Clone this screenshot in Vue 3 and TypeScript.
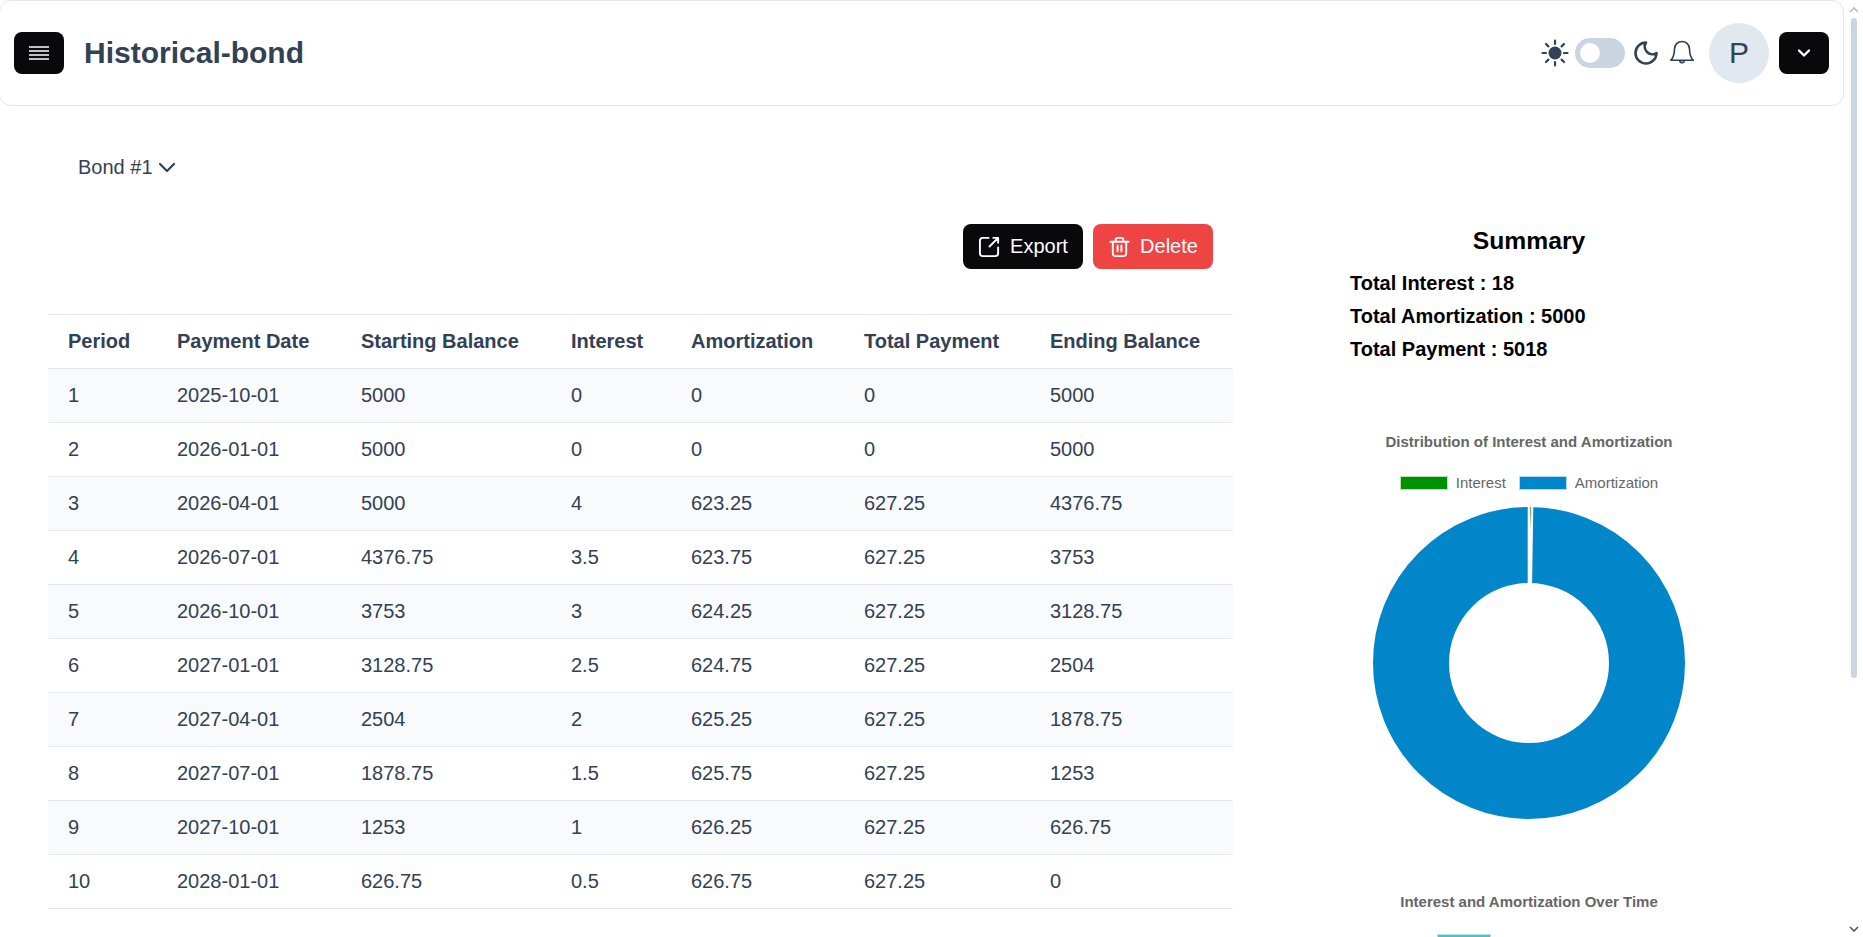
<template>
  <div class="page">
    <header class="topbar">
      <div class="topbar-left">
        <button class="dark-btn menu-btn">
          <svg width="20" height="14" viewBox="0 0 20 14"><path d="M0 1h20M0 5h20M0 9h20M0 13h20" stroke="#fff" stroke-width="1.5" fill="none" /></svg>
        </button>
        <h1 class="page-title">Historical-bond</h1>
      </div>
      <div class="topbar-right">
        <svg class="sun" width="28" height="28" viewBox="0 0 28 28" fill="none" stroke="#334155" stroke-width="2.2" stroke-linecap="round">
          <circle cx="14" cy="14" r="6.5" fill="#334155" stroke="none" />
          <path d="M14 1.5v3.5M14 23v3.5M1.5 14H5M23 14h3.5M5 5l2.4 2.4M20.6 20.6 23 23M5 23l2.4-2.4M20.6 7.4 23 5" />
        </svg>
        <span class="toggle"><span class="knob"></span></span>
        <svg class="moon" width="28" height="28" viewBox="0 0 24 24" fill="none" stroke="#334155" stroke-width="2.2" stroke-linecap="round" stroke-linejoin="round"><path d="M12 3a6.5 6.5 0 0 0 9 9 9 9 0 1 1-9-9Z" /></svg>
        <svg class="bell" width="30" height="30" viewBox="0 0 24 24" fill="none" stroke="#334155" stroke-width="1.3" stroke-linecap="round" stroke-linejoin="round"><path d="M6 8a6 6 0 0 1 12 0c0 7 3 9 3 9H3s3-2 3-9" /><path d="M10.3 18a2 2 0 0 0 3.4 0" /></svg>
        <span class="avatar">P</span>
        <button class="dark-btn caret-btn">
          <svg width="14" height="10" viewBox="0 0 14 10"><path d="M2 2.5l5 5 5-5" stroke="#fff" stroke-width="2.4" fill="none" stroke-linecap="round" stroke-linejoin="round" /></svg>
        </button>
      </div>
    </header>

    <div class="bond-select">
      <span>Bond #1</span>
      <svg width="20" height="12" viewBox="0 0 20 12"><path d="M3 3l7 7 7-7" stroke="#334155" stroke-width="2.2" fill="none" stroke-linecap="round" stroke-linejoin="round" /></svg>
    </div>

    <main class="content">
      <section class="left-col">
        <div class="actions">
          <button class="action-btn export">
            <svg width="23" height="23" viewBox="0 0 24 24" fill="none" stroke="#fff" stroke-width="2" stroke-linecap="round" stroke-linejoin="round"><path d="M11 3H5a3 3 0 0 0-3 3v13a3 3 0 0 0 3 3h13a3 3 0 0 0 3-3v-6" /><path d="M12 12 21 3M16 3h5v5" /></svg>
            Export
          </button>
          <button class="action-btn delete">
            <svg width="23" height="23" viewBox="0 0 24 24" fill="none" stroke="#fff" stroke-width="2" stroke-linecap="round" stroke-linejoin="round"><path d="M2.5 7h19M8 7V5a2 2 0 0 1 2-2h4a2 2 0 0 1 2 2v2M5 7v12a3 3 0 0 0 3 3h8a3 3 0 0 0 3-3V7M10 11v6M14 11v6" /></svg>
            Delete
          </button>
        </div>
        <table class="bond-table">
          <colgroup>
            <col v-for="w in colWidths" :key="w" :style="{ width: w + 'px' }" />
          </colgroup>
          <thead>
            <tr>
              <th v-for="h in headers" :key="h">{{ h }}</th>
            </tr>
          </thead>
          <tbody>
            <tr v-for="row in rows" :key="row[0]">
              <td v-for="(cell, i) in row" :key="i">{{ cell }}</td>
            </tr>
          </tbody>
        </table>
      </section>

      <aside class="right-col">
        <h2 class="summary-title">Summary</h2>
        <ul class="totals">
          <li>Total Interest : 18</li>
          <li>Total Amortization : 5000</li>
          <li>Total Payment : 5018</li>
        </ul>
        <div class="chart-title first">Distribution of Interest and Amortization</div>
        <div class="legend">
          <span class="swatch green"></span><span>Interest</span>
          <span class="swatch blue"></span><span>Amortization</span>
        </div>
        <svg class="donut" width="312" height="312" viewBox="0 0 312 312">
          <circle cx="156" cy="156" r="118" fill="none" stroke="#0086c9" stroke-width="76" />
          <path d="M154.7 0H160.3L159 80H154.7Z" fill="#fff" />
          <path d="M156.8 0H158.2L157.4 22Z" fill="#5cb85c" />
        </svg>
        <div class="chart-title second">Interest and Amortization Over Time</div>
        <span class="swatch teal"></span>
      </aside>
    </main>

    <div class="scrollbar">
      <svg width="10" height="6" viewBox="0 0 10 6"><path d="M1 5l4-4 4 4" stroke="#bbb" stroke-width="1.6" fill="none" /></svg>
      <div class="thumb"></div>
      <svg class="arrow-down" width="10" height="6" viewBox="0 0 10 6"><path d="M1 1l4 4 4-4" stroke="#555" stroke-width="1.6" fill="none" /></svg>
    </div>
  </div>
</template>

<script setup lang="ts">
const headers = ['Period', 'Payment Date', 'Starting Balance', 'Interest', 'Amortization', 'Total Payment', 'Ending Balance']
const colWidths = [109, 184, 210, 120, 173, 186, 203]
const rows: (string | number)[][] = [
  [1, '2025-10-01', 5000, 0, 0, 0, 5000],
  [2, '2026-01-01', 5000, 0, 0, 0, 5000],
  [3, '2026-04-01', 5000, 4, 623.25, 627.25, 4376.75],
  [4, '2026-07-01', 4376.75, 3.5, 623.75, 627.25, 3753],
  [5, '2026-10-01', 3753, 3, 624.25, 627.25, 3128.75],
  [6, '2027-01-01', 3128.75, 2.5, 624.75, 627.25, 2504],
  [7, '2027-04-01', 2504, 2, 625.25, 627.25, 1878.75],
  [8, '2027-07-01', 1878.75, 1.5, 625.75, 627.25, 1253],
  [9, '2027-10-01', 1253, 1, 626.25, 627.25, 626.75],
  [10, '2028-01-01', 626.75, 0.5, 626.75, 627.25, 0],
]
</script>

<style>
html, body { overflow: hidden; background: #fff; }
</style>

<style scoped>
.page {
  position: relative;
  height: 937px;
  overflow: hidden;
  font-family: "Liberation Sans", Arial, sans-serif;
  color: #334155;
}

.topbar {
  box-sizing: border-box;
  width: 1845px;
  height: 106px;
  margin-left: -1px;
  padding: 0 14px 0 14px;
  display: flex;
  align-items: center;
  justify-content: space-between;
  border: 1px solid #e2e8f0;
  border-radius: 12px;
}

.topbar-left {
  display: flex;
  align-items: center;
  gap: 20px;
}

.topbar-right {
  display: flex;
  align-items: center;
}

.dark-btn {
  border: none;
  padding: 0;
  background: #09090b;
  border-radius: 8px;
  display: flex;
  align-items: center;
  justify-content: center;
}

.menu-btn, .caret-btn {
  width: 50px;
  height: 42px;
}

.page-title {
  margin: 0;
  font-size: 30px;
  font-weight: 700;
}

.toggle {
  width: 50px;
  height: 30px;
  margin-left: 6px;
  border-radius: 15px;
  background: #cbd5e1;
  display: flex;
  align-items: center;
  padding-left: 5px;
  box-sizing: border-box;
}

.knob {
  width: 20px;
  height: 20px;
  border-radius: 50%;
  background: #fff;
}

.moon { margin-left: 7px; }
.bell { margin: 2px 1px 0 7px; }

.avatar {
  width: 60px;
  height: 60px;
  margin-left: 11px;
  border-radius: 50%;
  background: #e2e8f0;
  display: flex;
  align-items: center;
  justify-content: center;
  font-size: 30px;
}

.caret-btn { margin-left: 10px; }

.bond-select {
  margin: 49px 0 0 78px;
  height: 24px;
  display: flex;
  align-items: center;
  gap: 4px;
  font-size: 20px;
}

.content {
  display: flex;
  margin-top: 45px;
  padding-left: 48px;
}

.left-col {
  width: 1185px;
  flex: none;
}

.actions {
  display: flex;
  justify-content: flex-end;
  gap: 10px;
  padding-right: 20px;
}

.action-btn {
  width: 120px;
  height: 45px;
  border: none;
  border-radius: 8px;
  color: #fff;
  font: inherit;
  font-size: 20px;
  display: flex;
  align-items: center;
  justify-content: center;
  gap: 9px;
}

.export { background: #09090b; }
.delete { background: #ef4444; }

.bond-table {
  margin-top: 45px;
  width: 1185px;
  table-layout: fixed;
  border-collapse: collapse;
  font-size: 20px;
}

.bond-table th, .bond-table td {
  height: 54px;
  padding: 0 20px;
  box-sizing: border-box;
  text-align: left;
  border-top: 1px solid #e2e8f0;
  border-bottom: 1px solid #e2e8f0;
}

.bond-table th { font-weight: 700; }
.bond-table tbody tr:nth-child(odd) { background: #f8fafc; }

.right-col {
  width: 420px;
  margin-left: 86px;
  flex: none;
  display: flex;
  flex-direction: column;
  align-items: center;
  position: relative;
  color: #000;
}

.summary-title {
  margin: 0;
  font-size: 24.7px;
  line-height: 33px;
  font-weight: 700;
}

.totals {
  align-self: stretch;
  list-style: none;
  margin: 10px 0 0;
  padding: 0 0 0 31px;
  font-size: 20px;
  font-weight: 700;
  line-height: 33px;
}

.chart-title {
  color: #666;
  font-size: 15px;
  font-weight: 700;
  line-height: 18px;
}

.first { margin-top: 67px; }
.second { margin-top: 74px; }

.legend {
  margin-top: 24px;
  display: flex;
  align-items: center;
  color: #666;
  font-size: 15px;
  line-height: 16px;
}

.swatch {
  display: block;
  width: 48px;
  height: 14px;
  box-sizing: border-box;
  margin-right: 8px;
}

.legend span + .swatch { margin-left: 13px; }
.green { background: #009100; border: 1px solid #b5dfb5; }
.blue { background: #0086c9; border: 1px solid #b3dbef; }
.teal {
  width: 54px;
  background: #4bc0c0;
  border: 1px solid #b7e6e6;
  align-self: flex-start;
  margin: 23px 0 0 118px;
}

.donut {
  margin-top: 16px;
  display: block;
}

.scrollbar {
  position: absolute;
  top: 0;
  right: 0;
  bottom: 0;
  width: 18px;
  display: flex;
  flex-direction: column;
  align-items: center;
  padding-top: 7px;
  box-sizing: border-box;
}

.thumb {
  width: 6px;
  height: 660px;
  margin-top: 5px;
  background: #cbd5e1;
  border-radius: 3px;
}

.arrow-down {
  position: absolute;
  bottom: 5px;
}
</style>
